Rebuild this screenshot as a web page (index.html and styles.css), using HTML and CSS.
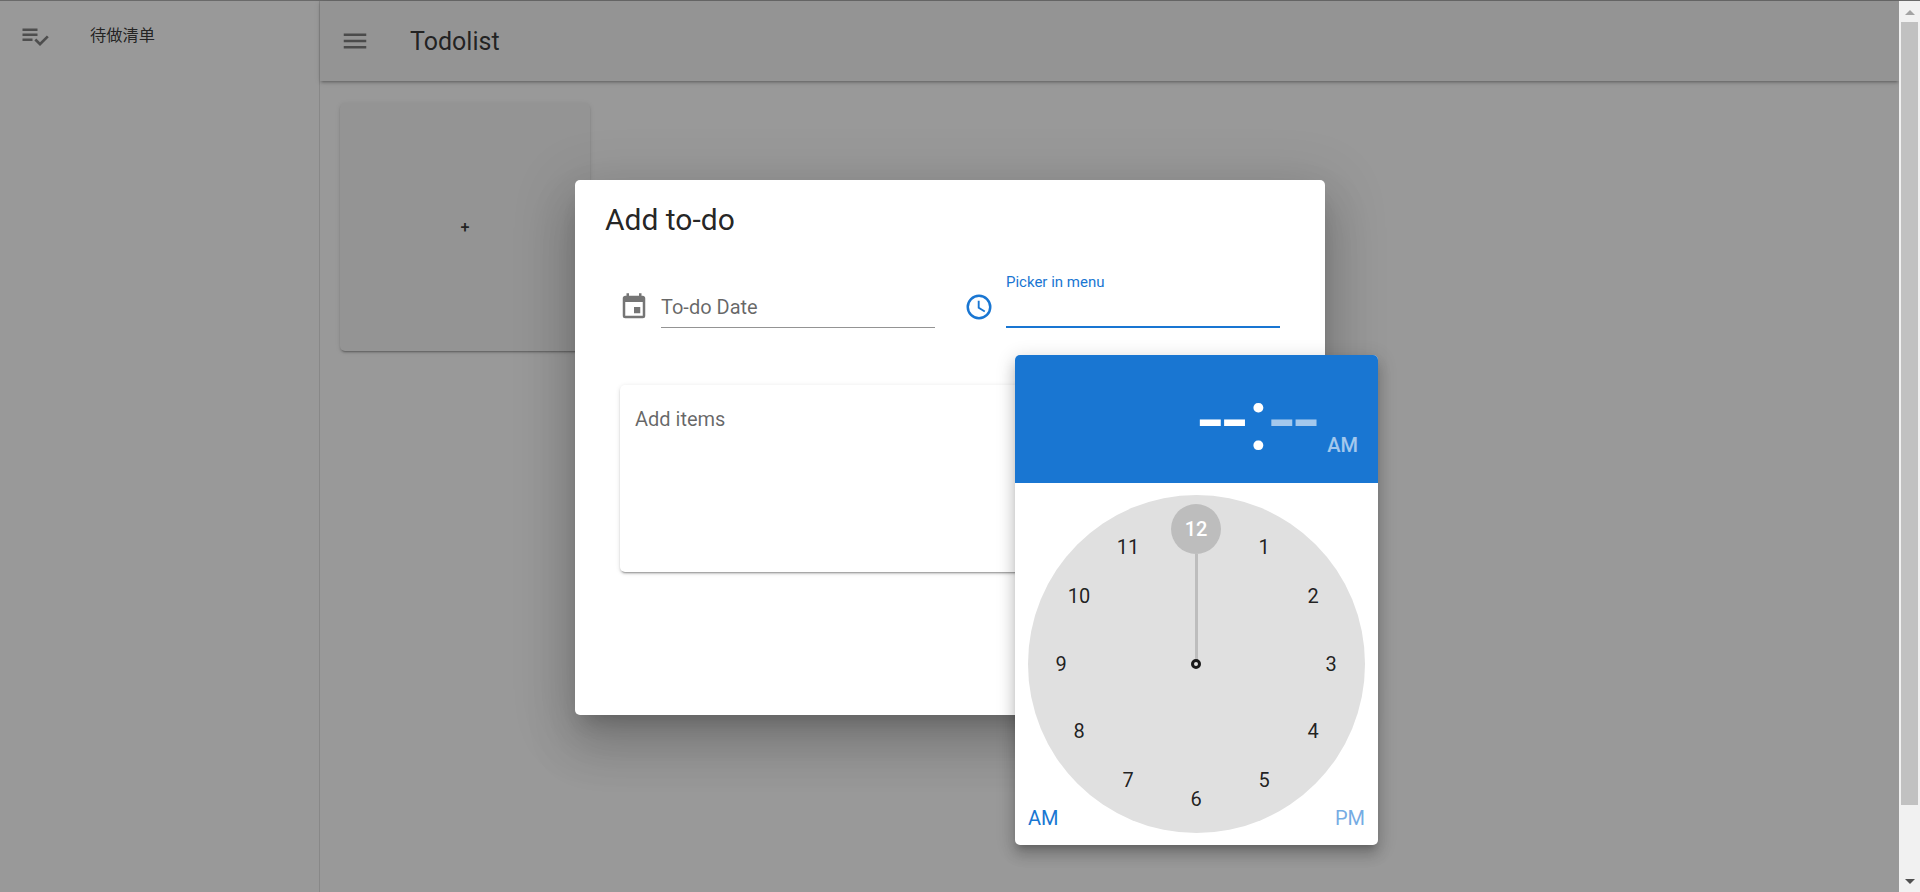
FILE: index.html
```html
<!DOCTYPE html>
<html lang="en">
<head>
<meta charset="UTF-8">
<meta name="viewport" content="width=device-width, initial-scale=1.0">
<title>Todolist</title>
<link rel="stylesheet" href="styles.css">
</head>
<body>
<div class="topline"></div>
<div class="app">
  <nav class="sidebar">
    <svg class="icon" viewBox="0 0 24 24"><path d="M14,10H2V12H14V10M14,6H2V8H14V6M2,16H10V14H2V16M21.5,11.5L23,13L16,20L11.5,15.5L13,14L16,17L21.5,11.5Z"/></svg>
    <span class="nav-label">待做清单</span>
  </nav>
  <div class="main">
    <header class="toolbar">
      <svg class="icon" viewBox="0 0 24 24"><path d="M3,6H21V8H3V6M3,11H21V13H3V11M3,16H21V18H3V16Z"/></svg>
      <span class="toolbar-title">Todolist</span>
    </header>
    <div class="content">
      <div class="add-card">+</div>
    </div>
  </div>
  <div class="scrollbar">
    <div class="arrow arrow-up"></div>
    <div class="thumb"></div>
    <div class="arrow arrow-down"></div>
  </div>
</div>

<div class="overlay"></div>

<div class="dialog">
  <h2 class="dialog-title">Add to-do</h2>
  <div class="fields">
    <div class="field">
      <svg class="icon field-icon" viewBox="0 0 24 24"><path d="M19,19H5V8H19M16,1V3H8V1H6V3H5C3.89,3 3,3.89 3,5V19A2,2 0 0,0 5,21H19A2,2 0 0,0 21,19V5C21,3.89 20.1,3 19,3H18V1M17,12H12V17H17V12Z"/></svg>
      <div class="input">To-do Date</div>
    </div>
    <div class="field">
      <svg class="icon field-icon icon-blue" viewBox="0 0 24 24"><path d="M12,20A8,8 0 0,0 20,12A8,8 0 0,0 12,4A8,8 0 0,0 4,12A8,8 0 0,0 12,20M12,2A10,10 0 0,1 22,12A10,10 0 0,1 12,22C6.47,22 2,17.5 2,12A10,10 0 0,1 12,2M12.5,7V12.25L17,14.92L16.25,16.15L11,13V7H12.5Z"/></svg>
      <div class="input-wrap">
        <label class="input-label">Picker in menu</label>
        <div class="input input-active"></div>
      </div>
    </div>
  </div>
  <div class="items-card">Add items</div>
</div>

<div class="picker">
  <div class="picker-title">
    <div class="picker-time"><span>--</span><span class="colon">:</span><span class="dim">--</span></div>
    <div class="picker-ampm">AM</div>
  </div>
  <div class="picker-body">
    <div class="clock">
      <div class="clock-hand"></div>
      <div class="clock-center"></div>
      <span class="num num-12 num-active">12</span>
      <span class="num num-1">1</span>
      <span class="num num-2">2</span>
      <span class="num num-3">3</span>
      <span class="num num-4">4</span>
      <span class="num num-5">5</span>
      <span class="num num-6">6</span>
      <span class="num num-7">7</span>
      <span class="num num-8">8</span>
      <span class="num num-9">9</span>
      <span class="num num-10">10</span>
      <span class="num num-11">11</span>
    </div>
    <div class="clock-ampm"><span>AM</span><span class="pm">PM</span></div>
  </div>
</div>
</body>
</html>
```

FILE: styles.css
```css
html, body {
  height: 100%;
}
body {
  font-family: Roboto, "Noto Sans CJK SC", sans-serif;
  margin: 0;
  overflow: hidden;
  background-color: #fff;
  color: rgba(0, 0, 0, 0.87);
}
.topline {
  height: 1px;
  background-color: #6a6a6a;
}
.app {
  display: flex;
  height: 891px;
}
.icon {
  width: 30px;
  height: 30px;
  flex: none;
  fill: rgba(0, 0, 0, 0.54);
}
.icon-blue {
  fill: #1976d2;
}

/* sidebar */
.sidebar {
  width: 299px;
  flex: none;
  display: flex;
  align-items: flex-start;
  padding: 20px 0 0 20px;
  border-right: 1px solid rgba(0, 0, 0, 0.12);
}
.nav-label {
  margin-left: 40px;
  font-size: 16.25px;
  line-height: 30px;
}

/* main column */
.main {
  flex: 1;
  display: flex;
  flex-direction: column;
}
.toolbar {
  height: 80px;
  display: flex;
  align-items: center;
  padding-left: 20px;
  background-color: #f5f5f5;
  box-shadow: 0 3px 2px -2px rgba(0, 0, 0, 0.2), 0 2px 3px 0 rgba(0, 0, 0, 0.14), 0 1px 6px 0 rgba(0, 0, 0, 0.12);
}
.toolbar-title {
  margin-left: 40px;
  font-size: 25px;
  font-weight: 400;
}
.content {
  padding: 22px 20px;
}
.add-card {
  width: 250px;
  height: 248px;
  display: flex;
  align-items: center;
  justify-content: center;
  border-radius: 5px;
  background-color: #f5f5f5;
  font-size: 16.25px;
  font-weight: 500;
  box-shadow: 0 3px 1px -2px rgba(0, 0, 0, 0.2), 0 2px 2px 0 rgba(0, 0, 0, 0.14), 0 1px 5px 0 rgba(0, 0, 0, 0.12);
}

/* scrollbar */
.scrollbar {
  width: 21px;
  flex: none;
  display: flex;
  flex-direction: column;
  align-items: center;
  background-color: #f1f1f1;
}
.arrow {
  width: 0;
  height: 0;
  border-left: 5px solid transparent;
  border-right: 5px solid transparent;
}
.arrow-up {
  margin-top: 9px;
  border-bottom: 5px solid #a3a3a3;
}
.thumb {
  width: 17px;
  height: 783px;
  margin-top: 7px;
  background-color: #c1c1c1;
}
.arrow-down {
  margin-top: 74px;
  border-top: 5px solid #505050;
}

/* modal */
.overlay {
  position: absolute;
  top: 1px;
  left: 0;
  right: 21px;
  bottom: 0;
  background-color: rgba(33, 33, 33, 0.46);
}
.dialog {
  position: absolute;
  left: 575px;
  top: 180px;
  width: 750px;
  height: 535px;
  box-sizing: border-box;
  padding-top: 19px;
  background-color: #fff;
  border-radius: 5px;
  box-shadow: 0 14px 19px -9px rgba(0, 0, 0, 0.2), 0 30px 48px 4px rgba(0, 0, 0, 0.14), 0 11px 58px 10px rgba(0, 0, 0, 0.12);
}
.dialog-title {
  margin: 0 0 0 30px;
  font-size: 30px;
  font-weight: 400;
  line-height: 42px;
}
.fields {
  display: flex;
  align-items: flex-end;
  gap: 29px;
  margin: 31px 0 0 44px;
}
.field {
  display: flex;
  align-items: flex-end;
  gap: 12px;
}
.field-icon {
  margin-bottom: 6px;
}
.input {
  width: 274px;
  height: 36px;
  box-sizing: border-box;
  border-bottom: 1px solid rgba(0, 0, 0, 0.42);
  font-size: 20px;
  line-height: 30px;
  color: rgba(0, 0, 0, 0.6);
}
.input-label {
  display: block;
  font-size: 15px;
  line-height: 20px;
  color: #1976d2;
}
.input-active {
  border-bottom: 2px solid #1976d2;
}
.items-card {
  width: 660px;
  height: 187px;
  box-sizing: border-box;
  margin: 57px 0 0 45px;
  padding: 19px 15px;
  border-radius: 5px;
  font-size: 20px;
  line-height: 30px;
  color: rgba(0, 0, 0, 0.6);
  box-shadow: 0 3px 1px -2px rgba(0, 0, 0, 0.2), 0 2px 2px 0 rgba(0, 0, 0, 0.14), 0 1px 5px 0 rgba(0, 0, 0, 0.12);
}

/* time picker menu */
.picker {
  position: absolute;
  left: 1015px;
  top: 355px;
  width: 363px;
  border-radius: 5px;
  overflow: hidden;
  background-color: #fff;
  box-shadow: 0 6px 6px -4px rgba(0, 0, 0, 0.2), 0 10px 13px 1px rgba(0, 0, 0, 0.14), 0 4px 18px 3px rgba(0, 0, 0, 0.12);
}
.picker-title {
  height: 128px;
  box-sizing: border-box;
  display: flex;
  justify-content: flex-end;
  align-items: flex-end;
  padding: 0 20px 26px 0;
  background-color: #1976d2;
  color: #fff;
}
.picker-time {
  font-size: 87.5px;
  line-height: 88px;
  margin-bottom: -6px;
  white-space: nowrap;
}
.colon {
  margin: 0 1px;
}
.dim {
  opacity: 0.6;
}
.picker-ampm {
  margin-left: 9px;
  font-size: 20px;
  font-weight: 500;
  line-height: 24px;
  opacity: 0.6;
}
.picker-body {
  position: relative;
  padding: 12px 13px;
  height: 362px;
  box-sizing: border-box;
}
.clock {
  position: relative;
  width: 337px;
  height: 338px;
  border-radius: 50%;
  background-color: #e0e0e0;
}
.clock-hand {
  position: absolute;
  left: 167px;
  top: 59px;
  width: 3px;
  height: 110px;
  background-color: #bdbdbd;
}
.clock-center {
  position: absolute;
  left: 163px;
  top: 164px;
  width: 10px;
  height: 10px;
  box-sizing: border-box;
  border: 3px solid #1a1a1a;
  border-radius: 50%;
  background-color: #e0e0e0;
}
.num {
  position: absolute;
  width: 50px;
  height: 50px;
  margin: -25px 0 0 -25px;
  border-radius: 50%;
  display: flex;
  align-items: center;
  justify-content: center;
  font-size: 20px;
}
.num-active {
  background-color: #bdbdbd;
  color: #fff;
  font-weight: 500;
}
.num-12 { left: 168px; top: 34px; }
.num-1 { left: 236px; top: 52px; }
.num-2 { left: 285px; top: 101px; }
.num-3 { left: 303px; top: 169px; }
.num-4 { left: 285px; top: 236px; }
.num-5 { left: 236px; top: 285px; }
.num-6 { left: 168px; top: 304px; }
.num-7 { left: 100px; top: 285px; }
.num-8 { left: 51px; top: 236px; }
.num-9 { left: 33px; top: 169px; }
.num-10 { left: 51px; top: 101px; }
.num-11 { left: 100px; top: 52px; }
.clock-ampm {
  position: absolute;
  left: 13px;
  right: 13px;
  top: 323px;
  display: flex;
  justify-content: space-between;
  font-size: 20px;
  line-height: 24px;
  color: #1976d2;
}
.pm {
  opacity: 0.6;
}
```
